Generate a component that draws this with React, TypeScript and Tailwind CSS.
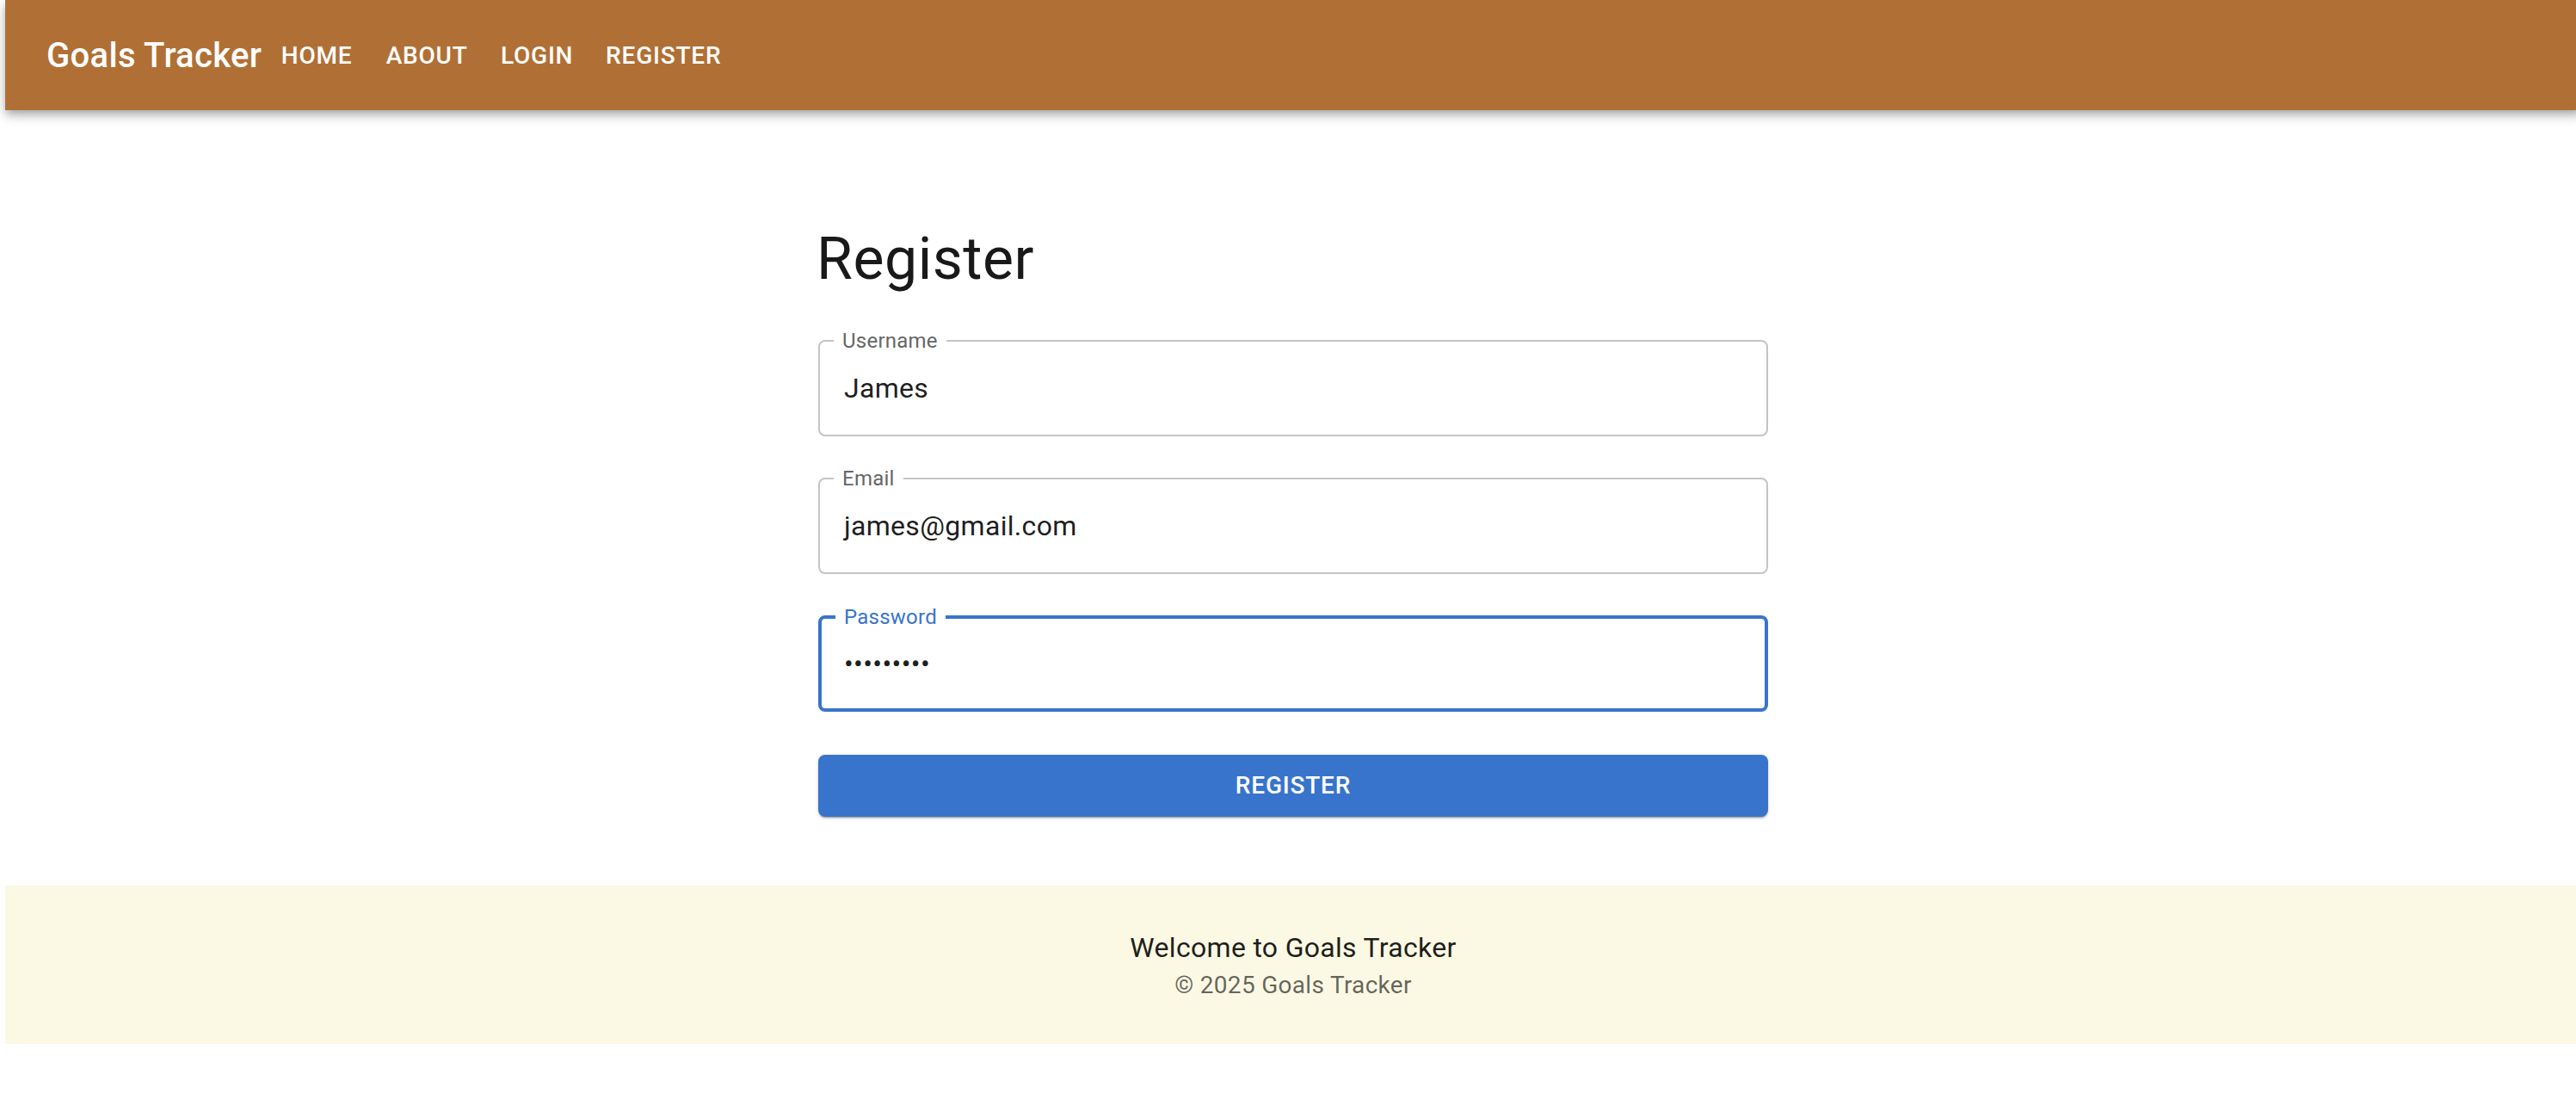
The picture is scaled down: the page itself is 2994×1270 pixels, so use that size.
import React from "react";

const font = { fontFamily: "Roboto, 'Helvetica Neue', Arial, sans-serif" };

function Field({
  label,
  value,
  focused = false,
}: {
  label: string;
  value: string;
  focused?: boolean;
}) {
  return (
    <div
      className={
        "relative h-[112px] rounded-[8px] flex items-center " +
        (focused ? "border-[4px] border-[#3874cb] px-[26px]" : "border-[2px] border-[#c4c4c4] px-[28px]")
      }
    >
      <span
        className={
          "absolute left-[16px] bg-white px-[10px] text-[24px] leading-[24px] tracking-[0.01em] " +
          (focused ? "top-[-14px] text-[#3874cb]" : "top-[-13px] text-[#666666]")
        }
      >
        {label}
      </span>
      <span className="text-[32px] leading-[46px] text-black/[0.9] tracking-[0.01em]">{value}</span>
    </div>
  );
}

export default function App() {
  return (
    <div className="w-[2994px] overflow-hidden bg-white" style={font}>
      <div className="ml-[6px] w-[2994px]">
        <header className="h-[128px] bg-[#b07035] flex items-center pl-[48px] pt-[2px] shadow-[0_4px_8px_-2px_rgba(0,0,0,0.2),0_8px_10px_0_rgba(0,0,0,0.14),0_2px_20px_0_rgba(0,0,0,0.12)] relative z-10">
          <div className="text-[40px] leading-[64px] font-medium text-white tracking-[0.0075em]">
            Goals Tracker
          </div>
          <nav className="flex">
            {["HOME", "ABOUT", "LOGIN", "REGISTER"].map((t) => (
              <div
                key={t}
                className="min-w-[128px] px-[16px] h-[72px] flex items-center justify-center text-[28px] font-medium text-white tracking-[0.02857em]"
              >
                {t}
              </div>
            ))}
          </nav>
        </header>

        <main className="w-[1104px] mx-auto pt-[131px]">
          <h1 className="text-[68px] leading-[84px] font-normal text-black/[0.9] tracking-[0.00735em] ml-[-2px]">
            Register
          </h1>
          <div className="flex flex-col gap-[48px] mt-[52px]">
            <Field label="Username" value="James" />
            <Field label="Email" value="james@gmail.com" />
            <Field label="Password" value="•••••••••" focused />
          </div>
          <button className="mt-[50px] w-full h-[72px] rounded-[8px] bg-[#3874cb] text-white text-[28px] font-medium tracking-[0.02857em] shadow-[0_3px_1px_-2px_rgba(0,0,0,0.2),0_2px_2px_0_rgba(0,0,0,0.14),0_1px_5px_0_rgba(0,0,0,0.12)]">
            REGISTER
          </button>
        </main>

        <footer className="mt-[80px] bg-[#fbf8e3] py-[48px] flex flex-col items-center">
          <div className="text-[32px] leading-[48px] text-black/[0.9] tracking-[0.00938em]">
            Welcome to Goals Tracker
          </div>
          <div className="text-[28px] leading-[40px] text-black/[0.6] tracking-[0.01071em]">
            © 2025 Goals Tracker
          </div>
        </footer>
      </div>
    </div>
  );
}
